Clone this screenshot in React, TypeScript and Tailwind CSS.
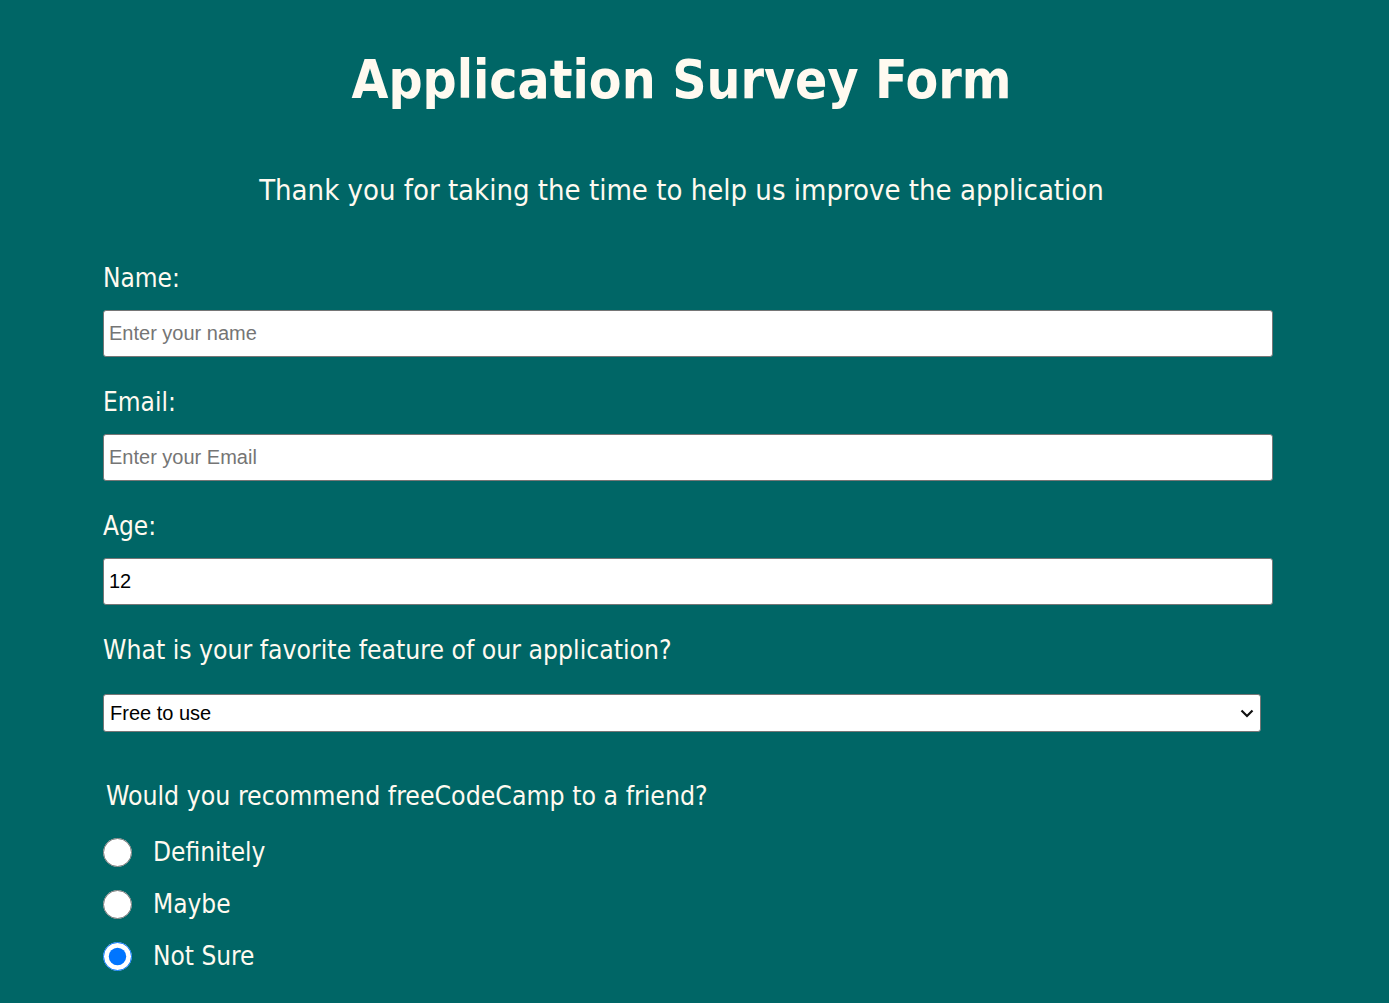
import { useState } from 'react';

const font = { fontFamily: '"DejaVu Sans Condensed", "DejaVu Sans", Tahoma, sans-serif' };
const arial = { fontFamily: '"Liberation Sans", Arial, sans-serif' };

const options = ['Free to use', 'Challenges', 'Projects', 'Community', 'Open source'];
const answers = ['Definitely', 'Maybe', 'Not Sure'];

function Field({ label, id, type, placeholder, value }: { label: string; id: string; type: string; placeholder: string; value?: string }) {
  return (
    <div className="mb-[29px]">
      <label htmlFor={id} className="block text-[26px] leading-[32px] mb-[16px]">
        {label}
      </label>
      <input
        id={id}
        type={type}
        placeholder={placeholder}
        defaultValue={value}
        className="block w-full h-[47px] px-[5px] bg-white text-black text-[20px] border border-[#767676] rounded-[3px] placeholder:text-[#757575] outline-none"
        style={arial}
      />
    </div>
  );
}

export default function App() {
  const [choice, setChoice] = useState('Not Sure');

  return (
    <div className="min-h-[1003px] bg-[#006666] text-[#fffaf0] pt-[48px]" style={font}>
      <h1 className="text-center pr-[26px] text-[53px] leading-[64px] font-bold">Application Survey Form</h1>
      <p className="text-center pr-[26px] mt-[58px] text-[29px] leading-[40px]">
        Thank you for taking the time to help us improve the application
      </p>

      <form className="ml-[103px] w-[1170px] mt-[52px]">
        <Field label="Name:" id="name" type="text" placeholder="Enter your name" />
        <Field label="Email:" id="email" type="email" placeholder="Enter your Email" />
        <Field label="Age:" id="age" type="number" placeholder="Age" value="12" />

        <label htmlFor="feature" className="block text-[26.3px] leading-[32px] mb-[28px]">
          What is your favorite feature of our application?
        </label>
        <div className="relative w-[1158px]">
          <select
            id="feature"
            className="block w-full h-[38px] pl-[6px] pr-[30px] appearance-none bg-white text-black text-[20px] border border-[#767676] rounded-[3px]"
            style={arial}
          >
            {options.map((o) => (
              <option key={o}>{o}</option>
            ))}
          </select>
          <svg
            className="absolute right-[7px] top-[12px] w-[14px] h-[14px] pointer-events-none"
            viewBox="0 0 14 14"
            fill="none"
            stroke="#111"
            strokeWidth="2.2"
          >
            <path d="M1.5 4.5 7 10 12.5 4.5" />
          </svg>
        </div>

        <p className="ml-[3px] mt-[48px] text-[26.4px] leading-[32px]">Would you recommend freeCodeCamp to a friend?</p>
        <div className="mt-[14px]">
          {answers.map((a) => (
            <label key={a} className="flex items-center h-[52px] text-[26px] cursor-pointer">
              <input
                type="radio"
                name="recommend"
                checked={choice === a}
                onChange={() => setChoice(a)}
                className="m-0 w-[29px] h-[29px]"
              />
              <span className="ml-[21px]">{a}</span>
            </label>
          ))}
        </div>
      </form>
    </div>
  );
}
